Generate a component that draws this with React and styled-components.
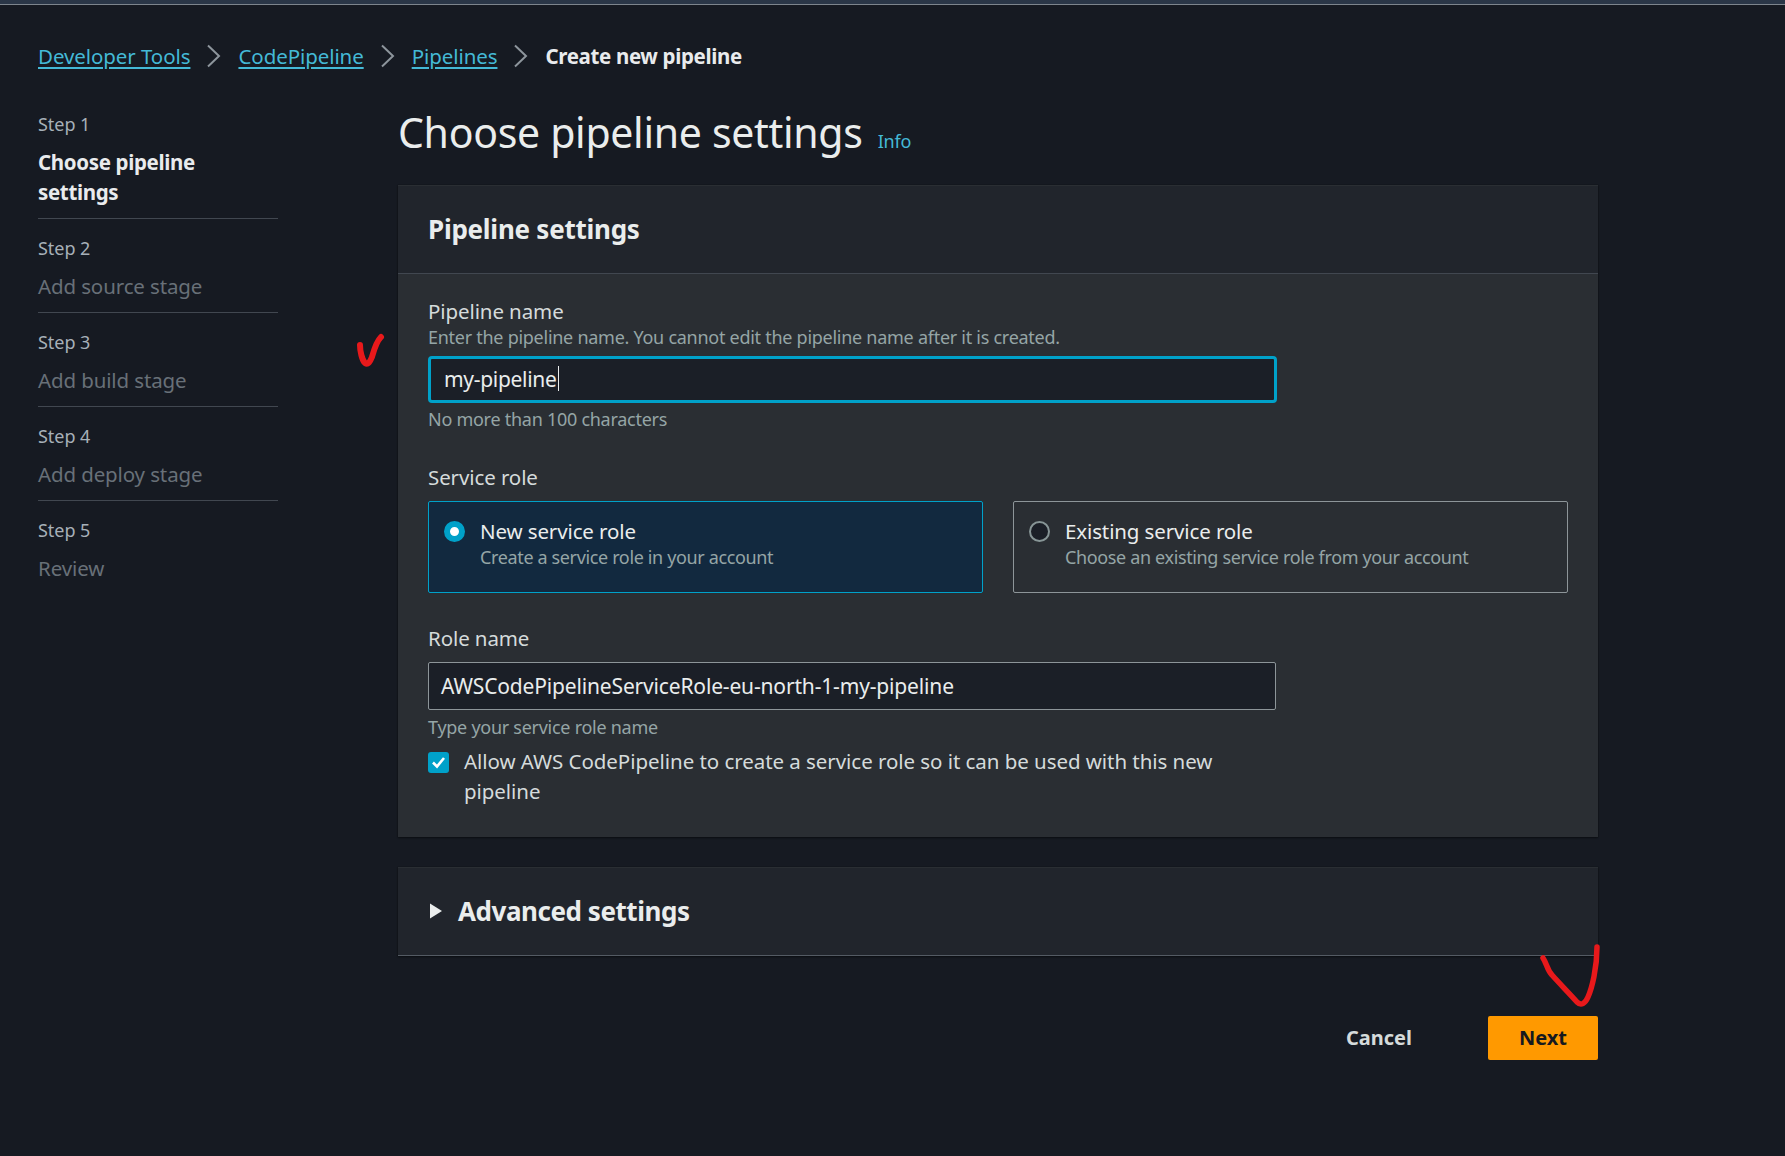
import React from "react";
import styled, { createGlobalStyle } from "styled-components";

const GlobalStyle = createGlobalStyle`
  html, body {
    margin: 0;
    background: #161a22;
  }
  * {
    box-sizing: border-box;
  }
`;

const Page = styled.div`
  position: relative;
  width: 1785px;
  height: 1156px;
  overflow: hidden;
  background: #161a22;
  color: #d5dbdb;
  font-family: "Noto Sans", "Open Sans", sans-serif;
`;

const TopStrip = styled.div`
  height: 5px;
  background: #2a3647;
  border-bottom: 1px solid #7d858d;
`;

const Breadcrumbs = styled.nav`
  display: flex;
  align-items: center;
  height: 30px;
  margin: 36px 0 0 38px;
  font-size: 20.5px;
`;

const Crumb = styled.a`
  color: #44b9d6;
  letter-spacing: -0.08px;
  text-decoration: underline;
  text-underline-offset: 3px;
`;

const CurrentCrumb = styled.span`
  color: #e9ebed;
  font-weight: 700;
  letter-spacing: -0.35px;
`;

const Chevron = styled.svg`
  width: 16px;
  height: 24px;
  margin: 0 16px;
  flex: none;
`;

const Body = styled.div`
  display: flex;
  margin: 26px 0 0 38px;
`;

const Steps = styled.ol`
  width: 240px;
  flex: none;
  margin: 15px 120px 0 0;
  padding: 0;
  list-style: none;
`;

const StepItem = styled.li`
  padding: ${props => (props.$first ? "0" : "17px")} 0 11px;
  border-bottom: ${props => (props.$last ? "none" : "1px solid #414750")};
`;

const StepNumber = styled.div`
  font-size: 18px;
  line-height: 24px;
  color: #a7b0b8;
  margin-bottom: 11px;
  letter-spacing: -0.05px;
`;

const StepTitle = styled.div`
  font-size: 20.5px;
  line-height: 30px;
  letter-spacing: ${props => (props.$active ? "-0.35px" : "-0.12px")};
  color: ${props => (props.$active ? "#e9ebed" : "#687078")};
  font-weight: ${props => (props.$active ? 700 : 400)};
`;

const Main = styled.main`
  width: 1200px;
  flex: none;
`;

const TitleRow = styled.div`
  display: flex;
  align-items: baseline;
  gap: 15px;
  height: 88px;
  padding-top: 7px;
`;

const Title = styled.h1`
  margin: 0;
  font-size: 41px;
  line-height: 56px;
  font-weight: 400;
  color: #eaeded;
  letter-spacing: -0.3px;
`;

const InfoLink = styled.a`
  color: #44b9d6;
  font-size: 18px;
  letter-spacing: -0.2px;
`;

const Panel = styled.section`
  background: #2a2e33;
  box-shadow: 0 1px 2px rgba(0, 0, 0, 0.45), 0 0 1px rgba(0, 0, 0, 0.4);
  margin-bottom: 30px;
`;

const PanelHeader = styled.header`
  display: flex;
  align-items: center;
  height: 89px;
  padding: 0 30px 1px;
  background: #21252c;
  border-bottom: 1px solid ${props => (props.$flat ? "#545b64" : "#414750")};
  border-top: 1px solid #2a2e33;
`;

const PanelTitle = styled.h2`
  margin: 0;
  font-size: 26px;
  font-weight: 700;
  color: #eaeded;
  letter-spacing: -0.25px;
`;

const AdvancedTitle = styled(PanelTitle)`
  letter-spacing: -0.45px;
`;

const PanelContent = styled.div`
  padding: 22px 30px 0;
  height: 563px;
`;

const Label = styled.div`
  font-size: 20.5px;
  line-height: 30px;
  color: #d5dbdb;
  letter-spacing: -0.1px;
`;

const Hint = styled.div`
  font-size: 18px;
  line-height: 24px;
  color: #95a5a6;
  letter-spacing: -0.27px;
`;

const NameHint = styled(Hint)`
  margin-top: -1px;
  margin-bottom: 7px;
`;

const FieldInput = styled.div`
  display: flex;
  align-items: center;
  width: ${props => (props.$focused ? "849px" : "848px")};
  height: ${props => (props.$focused ? "47px" : "48px")};
  padding: 0 ${props => (props.$focused ? "13px 2px" : "12px 0")};
  margin-bottom: ${props => (props.$focused ? "4px" : "5px")};
  font-size: 21px;
  letter-spacing: ${props => (props.$focused ? "-0.3px" : "-0.16px")};
  color: #eaeded;
  background: #1b1f27;
  border-radius: ${props => (props.$focused ? "4px" : "2px")};
  border: ${props => (props.$focused ? "3px solid #00a1c9" : "1px solid #8d9599")};
`;

const Caret = styled.span`
  width: 1.5px;
  height: 25px;
  background: #eaeded;
  margin-left: 1px;
`;

const ServiceLabel = styled(Label)`
  margin-top: 31px;
  margin-bottom: 9px;
`;

const RoleLabel = styled(Label)`
  margin-top: 30px;
  margin-bottom: 9px;
`;

const TileRow = styled.div`
  display: flex;
  gap: 30px;
`;

const Tile = styled.div`
  flex: none;
  display: flex;
  width: 555px;
  height: 92px;
  padding: 15px;
  gap: 15px;
  border-radius: 2px;
  background: ${props => (props.$selected ? "#12293f" : "transparent")};
  border: 1px solid ${props => (props.$selected ? "#00a1c9" : "#8d9599")};
`;

const Radio = styled.span`
  flex: none;
  width: 21px;
  height: 21px;
  margin-top: 4px;
  border-radius: 50%;
  background: ${props => (props.$on ? "#fff" : "#1b1f27")};
  border: ${props => (props.$on ? "6px solid #00a1c9" : "2px solid #879596")};
`;

const TileTitle = styled.div`
  font-size: 20.5px;
  line-height: 28px;
  color: #eaeded;
  letter-spacing: -0.12px;
`;

const TileText = styled.div`
  font-size: 18px;
  line-height: 24px;
  color: #95a5a6;
  letter-spacing: -0.36px;
`;

const CheckRow = styled.div`
  display: flex;
  gap: 15px;
  margin-top: 7px;
  width: 800px;
`;

const CheckBox = styled.span`
  flex: none;
  display: flex;
  align-items: center;
  justify-content: center;
  width: 21px;
  height: 21px;
  margin-top: 6px;
  border-radius: 3px;
  background: #00a1c9;
`;

const CheckText = styled.div`
  font-size: 20.5px;
  line-height: 30px;
  letter-spacing: -0.05px;
  color: #d5dbdb;
`;

const Disclosure = styled.svg`
  width: 14px;
  height: 16px;
  margin-right: 16px;
`;

const Actions = styled.div`
  display: flex;
  justify-content: flex-end;
  align-items: center;
  gap: 76px;
  margin-top: 60px;
`;

const LinkButton = styled.button`
  border: none;
  padding: 0 0 2px;
  background: none;
  font: 700 20px "Noto Sans", sans-serif;
  color: #d5dbdb;
`;

const PrimaryButton = styled.button`
  width: 110px;
  height: 44px;
  border: none;
  padding: 0 0 2px;
  border-radius: 2px;
  background: #ff9900;
  color: #16191f;
  font: 700 20px "Noto Sans", sans-serif;
`;

const Scribble = styled.svg`
  position: absolute;
  left: ${props => props.$x}px;
  top: ${props => props.$y}px;
  overflow: visible;
`;

const steps = [
  { n: 1, title: "Choose pipeline settings", active: true },
  { n: 2, title: "Add source stage" },
  { n: 3, title: "Add build stage" },
  { n: 4, title: "Add deploy stage" },
  { n: 5, title: "Review" }
];

const Sep = () => (
  <Chevron viewBox="0 0 16 24">
    <path d="M2 1.5 L13 12 L2 22.5" fill="none" stroke="#8d959c" strokeWidth="2" />
  </Chevron>
);

const App = () => {
  return (
    <Page>
      <GlobalStyle />
      <TopStrip />
      <Breadcrumbs>
        <Crumb>Developer Tools</Crumb>
        <Sep />
        <Crumb>CodePipeline</Crumb>
        <Sep />
        <Crumb>Pipelines</Crumb>
        <Sep />
        <CurrentCrumb>Create new pipeline</CurrentCrumb>
      </Breadcrumbs>
      <Body>
        <Steps>
          {steps.map((s, i) => (
            <StepItem key={s.n} $first={i === 0} $last={i === steps.length - 1}>
              <StepNumber>Step {s.n}</StepNumber>
              <StepTitle $active={s.active}>{s.title}</StepTitle>
            </StepItem>
          ))}
        </Steps>
        <Main>
          <TitleRow>
            <Title>Choose pipeline settings</Title>
            <InfoLink>Info</InfoLink>
          </TitleRow>
          <Panel>
            <PanelHeader>
              <PanelTitle>Pipeline settings</PanelTitle>
            </PanelHeader>
            <PanelContent>
              <Label>Pipeline name</Label>
              <NameHint>Enter the pipeline name. You cannot edit the pipeline name after it is created.</NameHint>
              <FieldInput $focused>
                my-pipeline
                <Caret />
              </FieldInput>
              <Hint>No more than 100 characters</Hint>
              <ServiceLabel>Service role</ServiceLabel>
              <TileRow>
                <Tile $selected>
                  <Radio $on />
                  <div>
                    <TileTitle>New service role</TileTitle>
                    <TileText>Create a service role in your account</TileText>
                  </div>
                </Tile>
                <Tile>
                  <Radio />
                  <div>
                    <TileTitle>Existing service role</TileTitle>
                    <TileText>Choose an existing service role from your account</TileText>
                  </div>
                </Tile>
              </TileRow>
              <RoleLabel>Role name</RoleLabel>
              <FieldInput>AWSCodePipelineServiceRole-eu-north-1-my-pipeline</FieldInput>
              <Hint>Type your service role name</Hint>
              <CheckRow>
                <CheckBox>
                  <svg width="15" height="13" viewBox="0 0 15 13">
                    <path d="M2 6.5 L6 10.5 L13 2" fill="none" stroke="#fff" strokeWidth="2.6" />
                  </svg>
                </CheckBox>
                <CheckText>Allow AWS CodePipeline to create a service role so it can be used with this new pipeline</CheckText>
              </CheckRow>
            </PanelContent>
          </Panel>
          <Panel>
            <PanelHeader $flat>
              <Disclosure viewBox="0 0 14 16">
                <path d="M2 0.5 L14 8 L2 15.5 Z" fill="#eaeded" />
              </Disclosure>
              <AdvancedTitle>Advanced settings</AdvancedTitle>
            </PanelHeader>
          </Panel>
          <Actions>
            <LinkButton>Cancel</LinkButton>
            <PrimaryButton>Next</PrimaryButton>
          </Actions>
        </Main>
      </Body>
      <Scribble $x={358} $y={334} width="24" height="34" viewBox="0 0 24 34">
        <path d="M2 11 C2 17 4 26 7 29 C10 31 12 28 14 23 C16 16 18 8 23 3" fill="none" stroke="#e8191b" strokeWidth="6" strokeLinecap="round" />
      </Scribble>
      <Scribble $x={1540} $y={944} width="60" height="66" viewBox="0 0 60 66">
        <path d="M3 14 C7 20 7 26 12 31 C20 40 30 50 37 58 C41 62 45 60 48 53 C52 44 57 24 57 3" fill="none" stroke="#e8191b" strokeWidth="5.5" strokeLinecap="round" />
      </Scribble>
    </Page>
  );
};

export default App;
